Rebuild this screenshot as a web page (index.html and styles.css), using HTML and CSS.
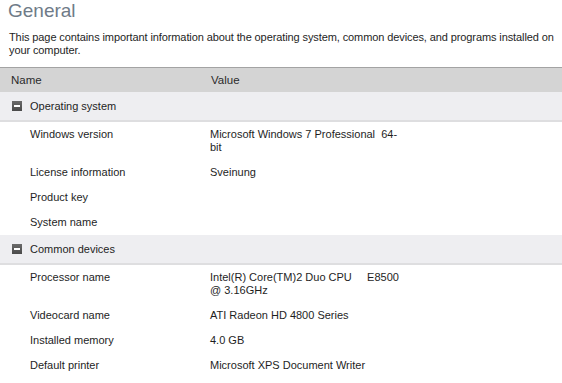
FILE: index.html
```html
<!DOCTYPE html>
<html lang="en">
<head>
  <meta charset="UTF-8">
  <title>General</title>
  <link rel="stylesheet" href="styles.css">
</head>
<body>
  <div class="page">
    <h1>General</h1>
    <p class="intro">This page contains important information about the operating system, common devices, and programs installed on your computer.</p>

    <div class="grid">
      <div class="head">
        <span>Name</span>
        <span>Value</span>
      </div>

      <div class="group"><span class="toggle"></span>Operating system</div>
      <div class="row"><span>Windows version</span><span>Microsoft Windows 7 Professional&nbsp; 64-<br>bit</span></div>
      <div class="row"><span>License information</span><span>Sveinung</span></div>
      <div class="row"><span>Product key</span><span class="hidden-val"></span></div>
      <div class="row"><span>System name</span><span class="hidden-val"></span></div>

      <div class="group"><span class="toggle"></span>Common devices</div>
      <div class="row"><span>Processor name</span><span>Intel(R) Core(TM)2 Duo CPU &nbsp; &nbsp; E8500<br>@ 3.16GHz</span></div>
      <div class="row"><span>Videocard name</span><span>ATI Radeon HD 4800 Series</span></div>
      <div class="row"><span>Installed memory</span><span>4.0 GB</span></div>
      <div class="row"><span>Default printer</span><span>Microsoft XPS Document Writer</span></div>
    </div>
  </div>
</body>
</html>
```

FILE: styles.css
```css
body {
  margin: 0;
  font-family: 'Liberation Sans', Arial, sans-serif;
  font-size: 11px;
  color: #1e1e1e;
  background: #fff;
  overflow: hidden;
}

h1 {
  margin: 0;
  padding: 0 0 0 8px;
  font-size: 19px;
  font-weight: 400;
  line-height: 22px;
  color: #6f7b88;
}

.intro {
  margin: 9px 0 0;
  padding: 0 0 0 9px;
  line-height: 13px;
  letter-spacing: -0.1px;
}

.grid {
  margin-top: 10px;
}

.head {
  display: grid;
  grid-template-columns: 200px 1fr;
  height: 24px;
  align-items: center;
  padding-left: 11px;
  background: #d4d4d4;
  border-top: 1px solid #a3a3a3;
  color: #2b2b2b;
  font-size: 11.5px;
}

.group {
  display: flex;
  align-items: center;
  height: 28px;
  padding-left: 12px;
  background: #eeeef1;
  border-bottom: 2px solid #dedee0;
}

.toggle {
  width: 10px;
  height: 10px;
  margin-right: 8px;
  background: linear-gradient(#6a6a6a, #4a4a4a);
  position: relative;
}

.toggle::after {
  content: "";
  position: absolute;
  left: 2px;
  right: 2px;
  top: 4px;
  height: 2px;
  background: #fff;
}

.row {
  display: grid;
  grid-template-columns: 180px 1fr;
  padding: 6px 0 6px 30px;
  line-height: 13px;
}

.hidden-val {
  height: 13px;
}
```
